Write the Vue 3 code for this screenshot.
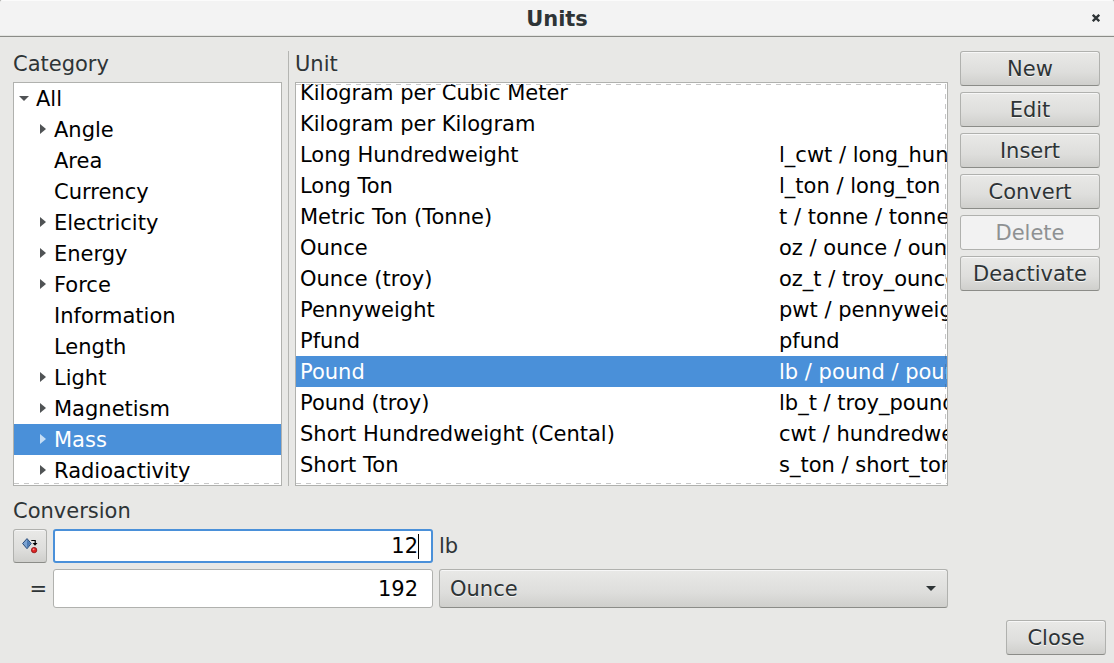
<script setup>
import { ref } from 'vue'

const categories = [
  { name: 'All', root: true, arrow: 'down' },
  { name: 'Angle', arrow: 'right' },
  { name: 'Area' },
  { name: 'Currency' },
  { name: 'Electricity', arrow: 'right' },
  { name: 'Energy', arrow: 'right' },
  { name: 'Force', arrow: 'right' },
  { name: 'Information' },
  { name: 'Length' },
  { name: 'Light', arrow: 'right' },
  { name: 'Magnetism', arrow: 'right' },
  { name: 'Mass', arrow: 'right' },
  { name: 'Radioactivity', arrow: 'right' },
]
const units = [
  ['Kilogram per Cubic Meter', ''],
  ['Kilogram per Kilogram', ''],
  ['Long Hundredweight', 'l_cwt / long_hundredweight'],
  ['Long Ton', 'l_ton / long_ton'],
  ['Metric Ton (Tonne)', 't / tonne / tonnes'],
  ['Ounce', 'oz / ounce / ounces'],
  ['Ounce (troy)', 'oz_t / troy_ounce'],
  ['Pennyweight', 'pwt / pennyweight'],
  ['Pfund', 'pfund'],
  ['Pound', 'lb / pound / pounds'],
  ['Pound (troy)', 'lb_t / troy_pound'],
  ['Short Hundredweight (Cental)', 'cwt / hundredweight'],
  ['Short Ton', 's_ton / short_ton'],
]
const actions = ['New', 'Edit', 'Insert', 'Convert', 'Delete', 'Deactivate']
const category = ref('Mass')
const unit = ref('Pound')
</script>

<template>
  <div class="window">
    <header class="titlebar">
      <span class="title">Units</span>
      <svg class="close-icon" width="8" height="8" viewBox="0 0 8 8"><path d="M.8 .8L7.2 7.2M7.2 .8L.8 7.2" /></svg>
    </header>

    <main class="body">
      <div class="left">
        <div class="panes">
          <section class="cat">
            <h2>Category</h2>
            <div class="list fade-bottom">
              <div v-for="c in categories" :key="c.name" class="row" :class="{ root: c.root, selected: c.name === category }" @click="category = c.name">
                <span class="expander">
                  <svg v-if="c.arrow === 'down'" width="10" height="5" viewBox="0 0 10 5"><path d="M0 0H10L5 5Z" /></svg>
                  <svg v-else-if="c.arrow" width="6" height="10" viewBox="0 0 6 10"><path d="M0 0L6 5L0 10Z" /></svg>
                </span>
                <span>{{ c.name }}</span>
              </div>
            </div>
          </section>
          <div class="sep"></div>
          <section class="unit">
            <h2>Unit</h2>
            <div class="list fade-top fade-bottom">
              <div class="scrolled">
                <div v-for="u in units" :key="u[0]" class="row urow" :class="{ selected: u[0] === unit }" @click="unit = u[0]">
                  <span>{{ u[0] }}</span><span>{{ u[1] }}</span>
                </div>
              </div>
            </div>
          </section>
        </div>

        <h2 class="conv-title">Conversion</h2>
        <div class="conv">
          <button class="btn swap">
            <svg width="18" height="18" viewBox="0 0 18 18">
              <path d="M6 1.6L10.2 6.5L6 11.7L1.6 6.5Z" fill="#7ba3d2" stroke="#294b78" stroke-width="1" />
              <path d="M6 2.4V11L9.5 6.5Z" fill="#4d7bb3" />
              <path d="M10.3 3.5H14.2V6.5" fill="none" stroke="#000" stroke-width="1.2" />
              <path d="M11.5 6H16.5L14 8.7Z" fill="#000" />
              <circle cx="13.1" cy="13.1" r="2.7" fill="#dc2525" stroke="#8d1010" stroke-width=".8" />
              <circle cx="12.6" cy="12.3" r=".9" fill="#ff9292" />
            </svg>
          </button>
          <div class="entry focused">12<i class="caret"></i></div>
          <span class="suffix">lb</span>
          <span class="equals">=</span>
          <div class="entry">192</div>
          <div class="btn combo">
            <span>Ounce</span>
            <svg width="10" height="5" viewBox="0 0 10 5"><path d="M0 0H10L5 5Z" fill="#2e3436" /></svg>
          </div>
        </div>
      </div>

      <aside class="actions">
        <button v-for="a in actions" :key="a" class="btn label" :disabled="a === 'Delete'">{{ a }}</button>
      </aside>
    </main>

    <footer><button class="btn label">Close</button></footer>
  </div>
</template>

<style>
body { margin: 0; background: #a6a7a5; overflow: hidden; }
</style>

<style scoped>
* { box-sizing: border-box; }
.window {
  width: 1114px; height: 663px; display: flex; flex-direction: column;
  background: #e8e8e6; color: #2e3436; overflow: hidden;
  border-radius: 3px 3px 0 0;
  font: 21px/31px "DejaVu Sans", sans-serif;
  white-space: nowrap; cursor: default;
}
.titlebar {
  height: 37px; flex: none; display: grid; grid-template-columns: 1fr auto 1fr; align-items: center;
  background: #f3f3f3; border-top: 1px solid #fbfbfb; border-bottom: 1px solid #8b8c88;
  box-shadow: inset 0 -1px #e3e4e1; padding-right: 14px;
}
.title { grid-column: 2; font-weight: bold; margin-left: 14px; padding-top: 2px; }
.close-icon { justify-self: end; margin-bottom: 1px; fill: none; stroke: #2e3436; stroke-width: 2.3; }
.body { display: flex; gap: 12px; padding: 14px 14px 0 13px; }
.left { width: 935px; flex: none; }
.panes { display: flex; height: 435px; }
h2 { margin: 0; font: inherit; height: 31px; line-height: 27px; }
.cat { width: 269px; }
.sep { width: 1px; margin: 0 6px; background: #b4b5b2; }
.unit { width: 653px; }
.list { position: relative; height: 404px; background: #fff; border: 1px solid #b0b1ae; overflow: hidden; color: #000; }
.fade-bottom::after {
  content: ""; position: absolute; left: 0; right: 0; bottom: 1px; height: 1px;
  background: repeating-linear-gradient(90deg, #c8c8c8 0 5px, transparent 5px 10px);
}
.fade-top::before {
  content: ""; position: absolute; z-index: 1; inset: 1px 1px 1px 0;
  background:
    repeating-linear-gradient(90deg, #c8c8c8 0 5px, transparent 5px 10px) top / 100% 1px no-repeat,
    repeating-linear-gradient(180deg, rgba(80, 80, 80, .32) 0 5px, transparent 5px 10px) right / 1px 100% no-repeat;
}
.scrolled { margin-top: -6px; }
.row { display: flex; height: 31px; line-height: 33px; padding-left: 22px; }
.row.root { padding-left: 4px; }
.expander { width: 18px; height: 30px; display: flex; align-items: center; padding-left: 4px; fill: #505355; }
.row.root .expander { height: 31px; padding-left: 1px; }
.row.selected { background: #4a90d9; color: #fff; }
.selected .expander { fill: #c6def5; }
.row.urow { display: grid; grid-template-columns: 479px 1fr; padding-left: 4px; }
.conv-title { margin-top: 12px; }
.conv { display: grid; grid-template-columns: 34px 380px 509px; grid-template-rows: 34px 39px; gap: 6px; align-items: center; }
.btn {
  border: 1px solid #b0b1ae; border-bottom-color: #8b8c88; border-radius: 3px; color: inherit; font: inherit;
  background: linear-gradient(#e9e9e7, #dededc 60%, #cfcfcc); box-shadow: inset 0 1px #f7f7f7;
  text-shadow: 0 1px rgba(255, 255, 255, .77); padding: 0;
}
.btn:disabled { background: #f2f2f2; color: #8e9192; border-color: #b0b1ae; box-shadow: none; text-shadow: none; }
.btn.label { padding-top: 1px; line-height: 30px; }
.swap { height: 34px; display: grid; place-items: center; }
.entry {
  height: 100%; background: #fff; border: 1px solid #b0b1ae; border-radius: 3px; color: #000;
  display: flex; align-items: center; justify-content: flex-end; padding: 2px 14px 0 0;
}
.entry.focused { border: 2px solid #4a90d9; padding: 0 12px 0 0; }
.caret { width: 1px; height: 25px; background: #000; }
.equals { text-align: right; padding-top: 2px; }
.combo { height: 39px; display: flex; align-items: center; justify-content: space-between; padding: 0 11px 0 10px; }
.combo span { padding-top: 2px; }
.actions { width: 140px; display: grid; grid-auto-rows: 35px; gap: 6px; align-content: start; }
footer { margin: auto 8px 8px auto; }
footer .btn { width: 100px; height: 35px; display: block; }
</style>
